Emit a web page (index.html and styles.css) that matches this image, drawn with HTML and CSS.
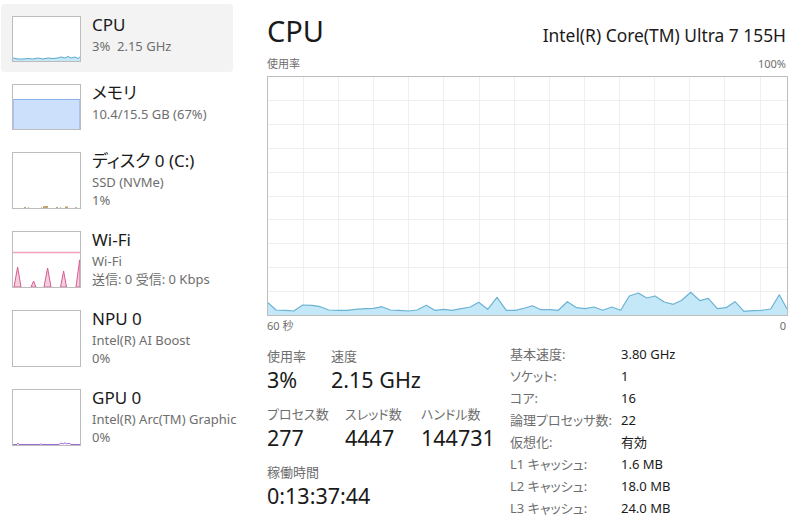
FILE: index.html
```html
<!DOCTYPE html>
<html lang="ja">
<head>
<meta charset="utf-8">
<link rel="stylesheet" href="styles.css">
</head>
<body>
<div class="app">
  <nav class="side">
    <div class="item sel">
      <div class="thumb short">
        <svg viewBox="0 0 67 44" width="67" height="44">
          <polygon fill="#c6e8f6" points="0,41 5,42 10,42 15,41.5 20,42 25,41 30,42 35,41 40,41.5 45,41 48,40 52,41 55,39.5 58,41 62,40 65,41.5 67,40 67,44 0,44"/>
          <polyline fill="none" stroke="#5ea9cc" stroke-width="1" points="0,41 5,42 10,42 15,41.5 20,42 25,41 30,42 35,41 40,41.5 45,41 48,40 52,41 55,39.5 58,41 62,40 65,41.5 67,40"/>
        </svg>
      </div>
      <div class="txt"><div class="ttl">CPU</div><div class="sub">3%&nbsp; 2.15 GHz</div></div>
    </div>
    <div class="item">
      <div class="thumb short">
        <svg viewBox="0 0 67 44" width="67" height="44">
          <rect x="0" y="14.5" width="67" height="29.5" fill="#cce0fb"/>
          <line x1="0" y1="14.5" x2="67" y2="14.5" stroke="#8db2e6" stroke-width="1"/>
          <line x1="0.5" y1="14.5" x2="0.5" y2="44" stroke="#a9c5ee" stroke-width="1"/>
          <line x1="66.5" y1="14.5" x2="66.5" y2="44" stroke="#a9c5ee" stroke-width="1"/>
        </svg>
      </div>
      <div class="txt"><div class="ttl">メモリ</div><div class="sub">10.4/15.5 GB (67%)</div></div>
    </div>
    <div class="item">
      <div class="thumb tall">
        <svg viewBox="0 0 67 55" width="67" height="55">
          <rect x="11" y="54" width="2" height="1" fill="#c0a778"/>
          <rect x="15" y="54" width="1" height="1" fill="#c9b58f"/>
          <rect x="28" y="54" width="1" height="1" fill="#c9b58f"/>
          <rect x="30" y="53" width="5" height="2" fill="#c0a778"/>
          <rect x="43" y="54" width="2" height="1" fill="#c0a778"/>
          <rect x="47" y="54" width="1" height="1" fill="#c9b58f"/>
          <rect x="52" y="53.5" width="3" height="1.5" fill="#b8a070"/>
          <rect x="62" y="54" width="2" height="1" fill="#c9b58f"/>
        </svg>
      </div>
      <div class="txt"><div class="ttl">ディスク 0 (C:)</div><div class="sub">SSD (NVMe)</div><div class="sub">1%</div></div>
    </div>
    <div class="item">
      <div class="thumb tall">
        <svg viewBox="0 0 67 55" width="67" height="55">
          <line x1="0" y1="20.5" x2="67" y2="20.5" stroke="#eea2bf" stroke-width="1.5"/>
          <polygon fill="#f4cfdd" stroke="#d65c91" stroke-width="1" points="1,55 4.6,35 8,55"/>
          <polygon fill="#f4cfdd" stroke="#d65c91" stroke-width="1" points="18,55 20.6,49 23,55"/>
          <polygon fill="#f4cfdd" stroke="#d65c91" stroke-width="1" points="31,55 34.6,36 38,55"/>
          <polygon fill="#f4cfdd" stroke="#d65c91" stroke-width="1" points="47.5,55 50.6,39 53.5,55"/>
          <polygon fill="#f4cfdd" stroke="#d65c91" stroke-width="1" points="63,55 66.6,28 67,28 67,55"/>
        </svg>
      </div>
      <div class="txt"><div class="ttl">Wi-Fi</div><div class="sub">Wi-Fi</div><div class="sub">送信: 0 受信: 0 Kbps</div></div>
    </div>
    <div class="item">
      <div class="thumb tall"></div>
      <div class="txt"><div class="ttl">NPU 0</div><div class="sub">Intel(R) AI Boost</div><div class="sub">0%</div></div>
    </div>
    <div class="item">
      <div class="thumb tall">
        <svg viewBox="0 0 67 55" width="67" height="55">
          <polyline fill="none" stroke="#9b6fd6" stroke-width="1" points="0,54.5 4,54.5 5,53 6,54.5 27,54.5 28,53.8 29,54.5 46,54.5 48,53 50,54 52,52.8 54,54 56,53.2 58,54.5 67,54.5"/>
        </svg>
      </div>
      <div class="txt"><div class="ttl">GPU 0</div><div class="sub">Intel(R) Arc(TM) Graphic</div><div class="sub">0%</div></div>
    </div>
  </nav>

  <main class="main">
    <div class="head">
      <h1 class="title">CPU</h1>
      <div class="model">Intel(R) Core(TM) Ultra 7 155H</div>
    </div>
    <div class="axis top"><span>使用率</span><span>100%</span></div>
    <div class="chart">
      <svg viewBox="0 0 519 238" width="519" height="238">
        <g stroke="#efefef" stroke-width="1">
          <line x1="0" y1="23.5" x2="519" y2="23.5"/>
          <line x1="0" y1="47.5" x2="519" y2="47.5"/>
          <line x1="0" y1="71.5" x2="519" y2="71.5"/>
          <line x1="0" y1="95.5" x2="519" y2="95.5"/>
          <line x1="0" y1="119.5" x2="519" y2="119.5"/>
          <line x1="0" y1="142.5" x2="519" y2="142.5"/>
          <line x1="0" y1="166.5" x2="519" y2="166.5"/>
          <line x1="0" y1="190.5" x2="519" y2="190.5"/>
          <line x1="0" y1="214.5" x2="519" y2="214.5"/>
          <line x1="35.5" y1="0" x2="35.5" y2="238"/>
          <line x1="70.5" y1="0" x2="70.5" y2="238"/>
          <line x1="105.5" y1="0" x2="105.5" y2="238"/>
          <line x1="140.5" y1="0" x2="140.5" y2="238"/>
          <line x1="175.5" y1="0" x2="175.5" y2="238"/>
          <line x1="211.5" y1="0" x2="211.5" y2="238"/>
          <line x1="246.5" y1="0" x2="246.5" y2="238"/>
          <line x1="281.5" y1="0" x2="281.5" y2="238"/>
          <line x1="316.5" y1="0" x2="316.5" y2="238"/>
          <line x1="351.5" y1="0" x2="351.5" y2="238"/>
          <line x1="386.5" y1="0" x2="386.5" y2="238"/>
          <line x1="421.5" y1="0" x2="421.5" y2="238"/>
          <line x1="456.5" y1="0" x2="456.5" y2="238"/>
          <line x1="492.5" y1="0" x2="492.5" y2="238"/>
        </g>
        <polygon fill="#c4e8f8" points="0,225.7 8,233 17.3,233.3 25.7,234 34.7,228 44,228.3 52.3,229.7 60.7,233 70.7,233.3 79,233.3 87.3,232.3 97.3,231.7 105.7,231.3 114,229.7 122.3,233 130.7,233.3 140.7,234 149,233 158.3,228.3 166.7,233.3 175.7,232.3 184,233.3 193.3,231.7 202.3,230 210.7,225.3 219.7,232.3 229,220.3 238.3,233.3 247.3,233.3 257,231 264.3,228.7 273,232.7 282,232.7 290.3,233.3 299.3,224.7 308.7,230.7 317,231.7 326,230 334.7,233.3 343.7,230 352.7,233.3 361.3,219 370.3,216 378.7,221 387,219 396.3,225 405.3,227.3 413.7,223.3 422.7,215.3 432,223.7 440.3,221.3 449.3,231.7 458,230.7 467,224.7 476,234.3 484.7,233.7 493.7,233.3 502.7,232 511.3,217.7 519,232 519,238 0,238"/>
        <polyline fill="none" stroke="#6cb3d3" stroke-width="1.2" stroke-linejoin="round" points="0,225.7 8,233 17.3,233.3 25.7,234 34.7,228 44,228.3 52.3,229.7 60.7,233 70.7,233.3 79,233.3 87.3,232.3 97.3,231.7 105.7,231.3 114,229.7 122.3,233 130.7,233.3 140.7,234 149,233 158.3,228.3 166.7,233.3 175.7,232.3 184,233.3 193.3,231.7 202.3,230 210.7,225.3 219.7,232.3 229,220.3 238.3,233.3 247.3,233.3 257,231 264.3,228.7 273,232.7 282,232.7 290.3,233.3 299.3,224.7 308.7,230.7 317,231.7 326,230 334.7,233.3 343.7,230 352.7,233.3 361.3,219 370.3,216 378.7,221 387,219 396.3,225 405.3,227.3 413.7,223.3 422.7,215.3 432,223.7 440.3,221.3 449.3,231.7 458,230.7 467,224.7 476,234.3 484.7,233.7 493.7,233.3 502.7,232 511.3,217.7 519,232"/>
      </svg>
    </div>
    <div class="axis bottom"><span>60 秒</span><span>0</span></div>

    <div class="stats">
      <div class="live">
        <div class="row">
          <div class="stat w64"><div class="lbl">使用率</div><div class="val">3%</div></div>
          <div class="stat"><div class="lbl">速度</div><div class="val">2.15 GHz</div></div>
        </div>
        <div class="row">
          <div class="stat w78"><div class="lbl">プロセス数</div><div class="val">277</div></div>
          <div class="stat w76"><div class="lbl">スレッド数</div><div class="val">4447</div></div>
          <div class="stat"><div class="lbl">ハンドル数</div><div class="val">144731</div></div>
        </div>
        <div class="row">
          <div class="stat"><div class="lbl">稼働時間</div><div class="val">0:13:37:44</div></div>
        </div>
      </div>
      <dl class="spec">
        <dt>基本速度:</dt><dd>3.80 GHz</dd>
        <dt>ソケット:</dt><dd>1</dd>
        <dt>コア:</dt><dd>16</dd>
        <dt>論理プロセッサ数:</dt><dd>22</dd>
        <dt>仮想化:</dt><dd>有効</dd>
        <dt>L1 キャッシュ:</dt><dd>1.6 MB</dd>
        <dt>L2 キャッシュ:</dt><dd>18.0 MB</dd>
        <dt>L3 キャッシュ:</dt><dd>24.0 MB</dd>
      </dl>
    </div>
  </main>
</div>
</body>
</html>
```

FILE: styles.css
```css
* { box-sizing: border-box; }
html, body {
  margin: 0;
  padding: 0;
  background: #ffffff;
}
body {
  font-family: "Noto Sans", "Noto Sans CJK JP", sans-serif;
  font-feature-settings: "palt";
  color: #1a1a1a;
  width: 800px;
  height: 523px;
  overflow: hidden;
}
.app {
  display: flex;
  align-items: flex-start;
}

/* sidebar */
.side {
  width: 240px;
  flex: none;
  padding: 4px 0 0 1px;
}
.item {
  display: flex;
  align-items: flex-start;
  gap: 11px;
  width: 232px;
  padding: 12px 0 10px 11px;
  border-radius: 4px;
}
.item.sel { background: #f3f3f3; }
.thumb {
  flex: none;
  width: 69px;
  border: 1px solid #bcbcbc;
  background: #ffffff;
}
.thumb svg { display: block; }
.thumb.short { height: 46px; }
.thumb.tall { height: 57px; }
.txt {
  white-space: nowrap;
  min-width: 0;
}
.ttl {
  font-size: 17px;
  line-height: 18px;
  margin-bottom: 3px;
  color: #1a1a1a;
}
.sub {
  font-size: 13px;
  line-height: 18px;
  color: #6e6e6e;
}

/* main */
.main {
  width: 550px;
  padding-left: 27px;
  flex: none;
}
.head {
  display: flex;
  justify-content: space-between;
  align-items: baseline;
  padding-top: 11px;
  width: 521px;
}
.title {
  margin: 0;
  font-weight: 400;
  font-size: 29px;
  line-height: 40px;
}
.model {
  font-size: 17.4px;
  line-height: 24px;
  margin-right: 2px;
}
.axis {
  display: flex;
  justify-content: space-between;
  width: 521px;
  font-size: 11px;
  line-height: 16px;
  color: #6e6e6e;
  padding-right: 2px;
}
.axis.top { margin-top: 5px; }
.axis.bottom { margin-top: 2px; }
.chart {
  width: 521px;
  height: 240px;
  margin-top: 4px;
  border: 1px solid #bdbdbd;
  background: #ffffff;
}
.chart svg { display: block; }

/* stats */
.stats {
  display: grid;
  grid-template-columns: 243px auto;
  margin-top: 10px;
}
.live { padding-top: 2px; }
.row {
  display: flex;
  margin-bottom: 10px;
}
.stat { flex: none; }
.w64 { width: 64px; }
.w78 { width: 78px; }
.w76 { width: 76px; }
.lbl {
  font-size: 13px;
  line-height: 20px;
  color: #6e6e6e;
}
.val {
  font-size: 21.5px;
  line-height: 28px;
  color: #1a1a1a;
}
.spec {
  display: grid;
  grid-template-columns: 111px auto;
  margin: 0;
  font-size: 13px;
  line-height: 21.57px;
}
.spec dt { color: #6e6e6e; white-space: nowrap; }
.spec dd { margin: 0; color: #1a1a1a; }
```
